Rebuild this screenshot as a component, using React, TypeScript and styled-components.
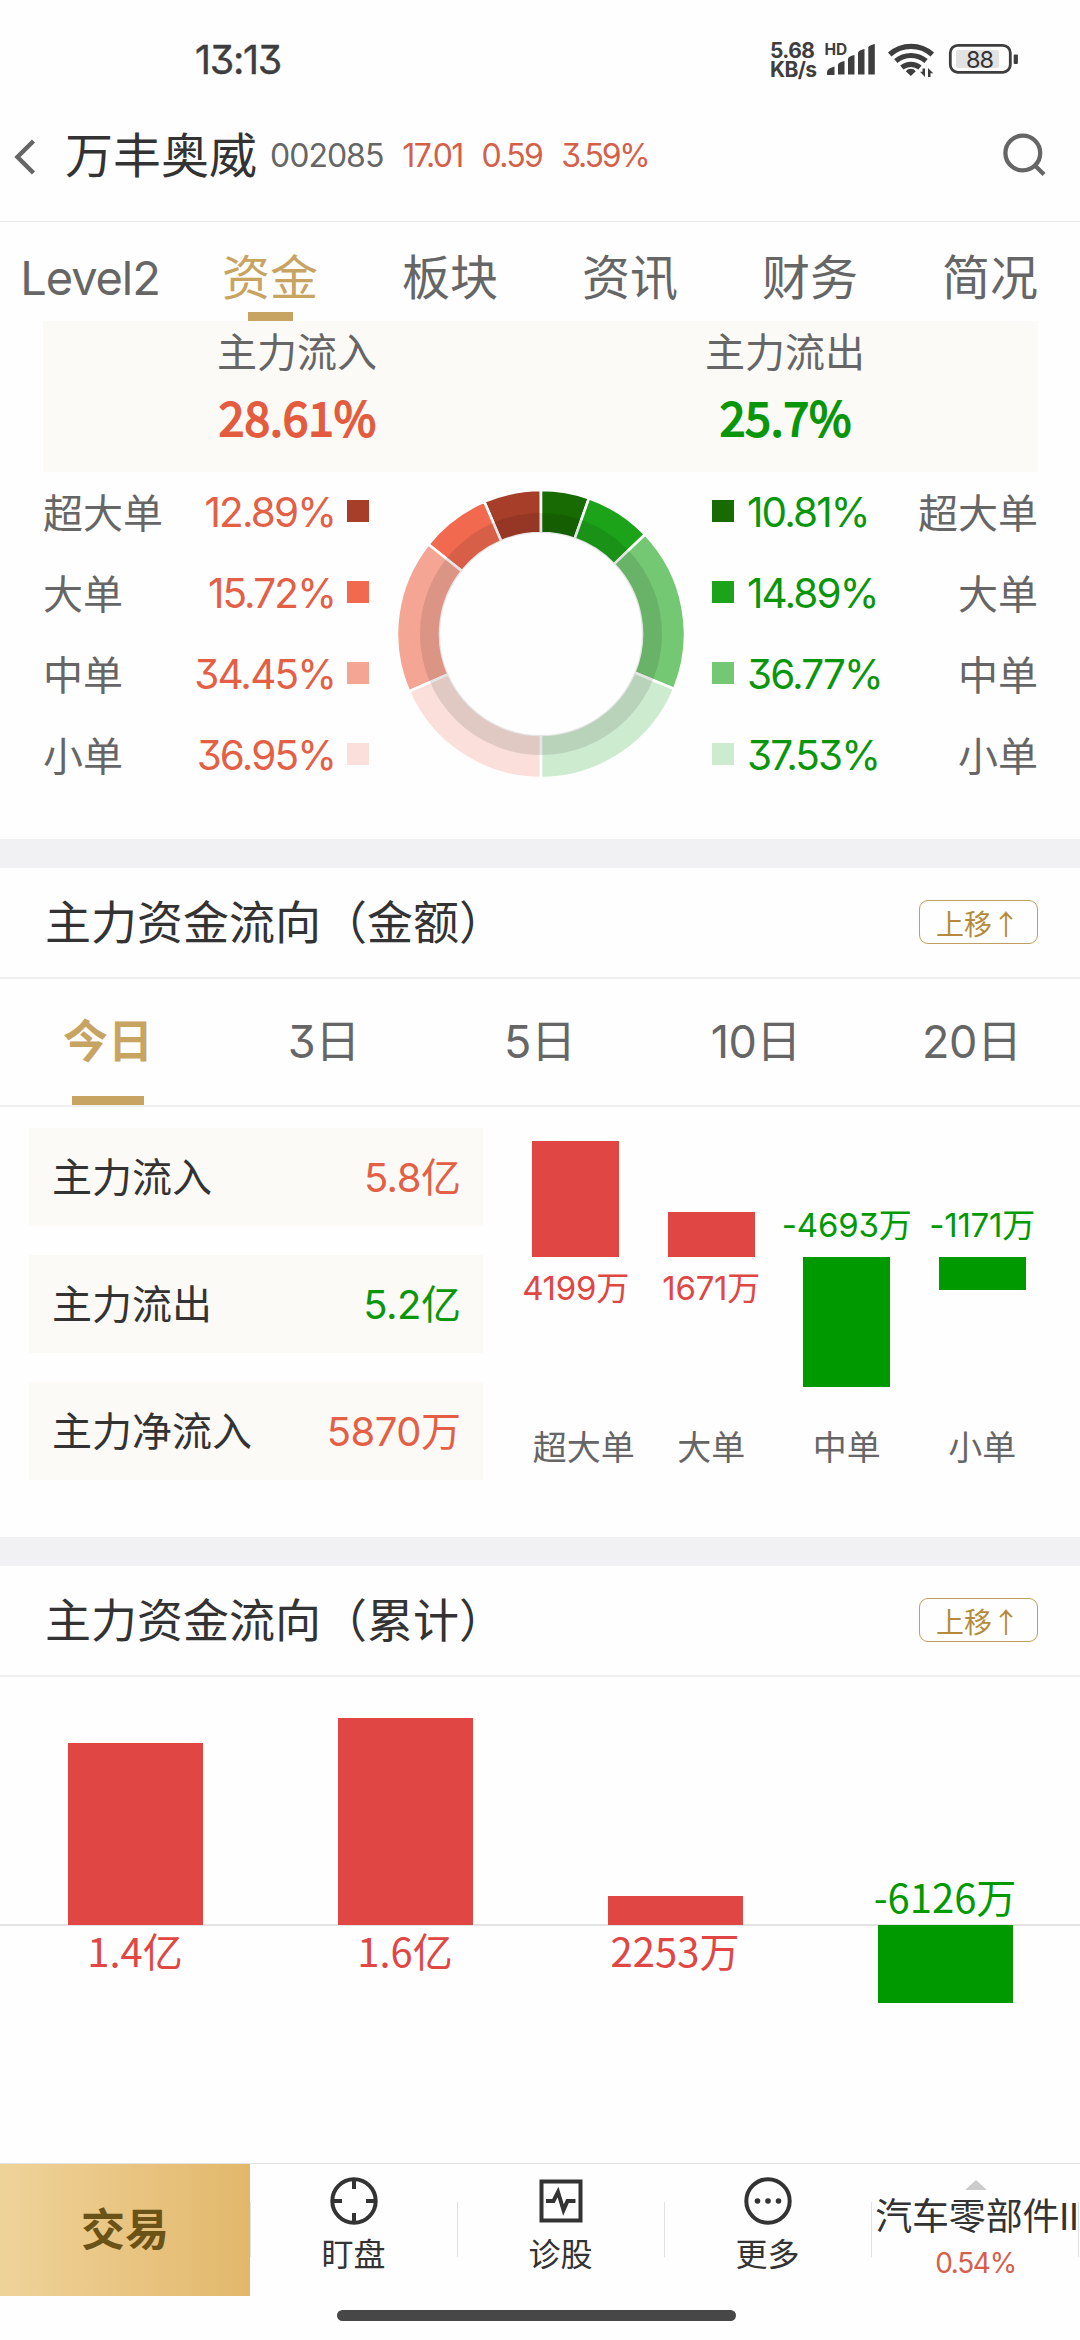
import React from "react";
import styled, { createGlobalStyle } from "styled-components";

const RED = "#e35f45";
const GREEN = "#0a960a";
const GOLD = "#c8a462";

const UI_FONT = `Inter, "Noto Sans CJK SC", sans-serif`;
const CJK_FONT = `"Noto Sans CJK SC", "Noto Sans", sans-serif`;

const GlobalStyle = createGlobalStyle`
  * { box-sizing: border-box; }
  body {
    margin: 0;
    background: #fefefe;
    font-family: ${UI_FONT};
    font-feature-settings: "cv09" 1;
    color: #333;
  }
`;

const Screen = styled.div`
  display: flex;
  flex-direction: column;
  width: 1080px;
  height: 2340px;
  overflow: hidden;
  background: #fefefe;
`;

const Num = styled.span<{ $size?: number; $track?: number; $color?: string }>`
  font-size: ${(p) => (p.$size ? `${p.$size}px` : "inherit")};
  letter-spacing: ${(p) => p.$track ?? -1}px;
  color: ${(p) => p.$color ?? "inherit"};
`;

/* ---------- status bar ---------- */

const StatusBar = styled.header`
  display: flex;
  justify-content: space-between;
  height: 110px;
  padding: 40px 61px 0 195px;
  color: #3e3e3e;
`;

const Clock = styled.div`
  font-size: 39.5px;
  font-weight: 400;
  line-height: 40px;
  letter-spacing: -1.3px;
  -webkit-text-stroke: 0.4px #3e3e3e;
`;

const StatusIcons = styled.div`
  display: flex;
  align-items: flex-start;
`;

const NetSpeed = styled.div`
  display: flex;
  flex-direction: column;
  width: 55px;
  padding-top: 1px;
  font-size: 21px;
  line-height: 19px;
  font-weight: 700;
  letter-spacing: -0.6px;
`;

const SignalBox = styled.svg`
  display: block;
  font-family: ${UI_FONT};
`;

/* ---------- title bar ---------- */

const TitleBar = styled.div`
  display: flex;
  align-items: center;
  height: 112px;
  padding: 0 32px 22px 12px;
  border-bottom: 1px solid #e6e6e6;
`;

const BackIcon = styled.svg`
  width: 26px;
  height: 40px;
  margin: 4px 28px 0 0;
`;

const StockName = styled.h1`
  margin: 2px 13px 0 -1px;
  font-size: 48px;
  line-height: 60px;
  font-weight: 400;
`;

const Quote = styled.div`
  display: flex;
  flex: 1;
  gap: 19px;
  color: #666;
  font-size: 32px;
  line-height: 40px;
  padding-top: 3px;
`;

/* ---------- page tabs ---------- */

const PageTabs = styled.nav`
  display: grid;
  grid-template-columns: repeat(6, 180px);
  height: 99px;
`;

const PageTab = styled.div<{ $active?: boolean }>`
  display: flex;
  flex-direction: column;
  align-items: center;
  justify-content: flex-end;
  font-size: 48px;
  line-height: 68px;
  color: ${(p) => (p.$active ? GOLD : "#666")};
  &::after {
    content: "";
    width: 45px;
    height: 9px;
    background: ${(p) => (p.$active ? GOLD : "transparent")};
  }
`;

/* ---------- distribution ---------- */

const Distribution = styled.section`
  height: 518px;
  padding: 0 42px 0 43px;
`;

const TotalsPanel = styled.div`
  display: grid;
  grid-template-columns: 508px 1fr;
  height: 151px;
  background: #fbfaf6;
`;

const Total = styled.div<{ $shift?: number }>`
  display: flex;
  flex-direction: column;
  align-items: center;
  padding-right: ${(p) => p.$shift ?? 0}px;
`;

const TotalLabel = styled.div`
  font-size: 40px;
  line-height: 60px;
  padding-top: 2px;
  color: #666;
`;

const TotalValue = styled.div<{ $color: string }>`
  font-family: ${CJK_FONT};
  font-size: 46px;
  line-height: 67px;
  padding-left: 1px;
  color: ${(p) => p.$color};
  -webkit-text-stroke: 1.8px ${(p) => p.$color};
`;

const Breakdown = styled.div`
  display: grid;
  grid-template-columns: 326px 1fr 326px;
`;

const OrderList = styled.ul`
  list-style: none;
  margin: 0;
  padding: 0;
`;

const OrderRow = styled.li<{ $side: "in" | "out" }>`
  display: flex;
  flex-direction: ${(p) => (p.$side === "in" ? "row" : "row-reverse")};
  align-items: center;
  height: 81px;
  font-size: 40px;
  color: ${(p) => (p.$side === "in" ? RED : GREEN)};
`;

const OrderName = styled.span`
  flex: 1;
  padding-bottom: 4px;
  color: #666;
  ${OrderRow}[data-side="out"] & {
    text-align: right;
  }
`;

const Swatch = styled.i<{ $color: string }>`
  width: 22px;
  height: 22px;
  margin: -4px 13px 0 12px;
  background: ${(p) => p.$color};
  ${OrderRow}[data-side="in"] & {
    margin-right: 0;
  }
  ${OrderRow}[data-side="out"] & {
    margin-left: 0;
  }
`;

const Donut = styled.svg`
  width: 290px;
  height: 290px;
  justify-self: center;
  margin-top: 17px;
`;

/* ---------- sections ---------- */

const Gap = styled.div`
  flex: none;
  height: 29px;
  background: #f1f1f4;
`;

const SectionHead = styled.div`
  display: flex;
  flex: none;
  align-items: center;
  justify-content: space-between;
  height: 111px;
  padding: 0 42px 1px 45px;
  border-bottom: 2px solid #f0f0f0;
`;

const SectionTitle = styled.h2`
  margin: 0;
  font-size: 46px;
  line-height: 60px;
  font-weight: 400;
`;

const MoveUp = styled.button`
  width: 119px;
  height: 44px;
  padding: 2px 0 0 16px;
  border: 1px solid #bf9f5f;
  border-radius: 9px;
  background: transparent;
  color: #b58b3b;
  font-family: ${CJK_FONT};
  font-size: 28px;
  line-height: 38px;
  text-align: left;
`;

const PeriodTabs = styled.nav`
  display: grid;
  flex: none;
  grid-template-columns: repeat(5, 216px);
  height: 128px;
  border-bottom: 2px solid #f0f0f0;
`;

const PeriodTab = styled.div<{ $active?: boolean }>`
  display: flex;
  flex-direction: column;
  align-items: center;
  justify-content: flex-end;
  font-size: 45px;
  line-height: 108px;
  font-weight: ${(p) => (p.$active ? 700 : 400)};
  color: ${(p) => (p.$active ? GOLD : "#666")};
  &::after {
    content: "";
    width: 72px;
    height: 9px;
    background: ${(p) => (p.$active ? GOLD : "transparent")};
  }
`;

const FlowBody = styled.section`
  display: grid;
  flex: none;
  grid-template-columns: 454px 542px;
  column-gap: 25px;
  height: 430px;
  padding-left: 29px;
`;

const FlowCards = styled.div`
  display: flex;
  flex-direction: column;
  gap: 29px;
  padding-top: 21px;
`;

const FlowCard = styled.div`
  display: flex;
  align-items: center;
  justify-content: space-between;
  height: 98px;
  padding: 0 22px 5px 23px;
  background: #fbfaf6;
  font-size: 40px;
`;

const BarGrid = styled.div<{ $columns: string; $up: number; $down: number }>`
  display: grid;
  grid-template-columns: ${(p) => p.$columns};
  grid-template-rows: ${(p) => p.$up}px ${(p) => p.$down}px;
  grid-auto-flow: column;
`;

const Upper = styled.div`
  display: flex;
  flex-direction: column;
  align-items: center;
  justify-content: flex-end;
`;

const Lower = styled.div`
  display: flex;
  flex-direction: column;
  align-items: center;
`;

const Bar = styled.div<{ $color: string; $width: number }>`
  width: ${(p) => p.$width}px;
  background: ${(p) => p.$color};
`;

const FlowValue = styled.div<{ $color: string }>`
  color: ${(p) => p.$color};
  font-size: 33px;
  line-height: 63px;
  white-space: nowrap;
`;

const FlowLabels = styled.div`
  display: grid;
  grid-template-columns: repeat(4, 135.5px);
  font-size: 34px;
  line-height: 46px;
  color: #666;
  text-align: center;
`;

const FlowLabel = styled.span<{ $indent?: number }>`
  padding-left: ${(p) => p.$indent ?? 0}px;
`;

const Cumulative = styled.section`
  flex: 1;
`;

const CumulativeGrid = styled(BarGrid)`
  background: linear-gradient(#e3e3e3, #e3e3e3) 0 247px / 100% 2px no-repeat;
`;

const CumulativeValue = styled.div<{ $color: string }>`
  color: ${(p) => p.$color};
  font-family: ${CJK_FONT};
  font-size: 40px;
  line-height: 50px;
  ${Upper} > & {
    padding-bottom: 4px;
  }
`;

/* ---------- bottom bar ---------- */

const BottomBar = styled.footer`
  display: grid;
  flex: none;
  grid-template-columns: 250px 207px 207px 207px 209px;
  height: 133px;
  border-top: 1px solid #e2e2e2;
`;

const Trade = styled.div`
  display: grid;
  place-items: center;
  padding-bottom: 6px;
  background: linear-gradient(90deg, #eed399, #e8c27e 60%, #e1b86b);
  color: #6b5217;
  font-size: 44px;
  font-weight: 700;
`;

const Action = styled.div`
  display: flex;
  flex-direction: column;
  align-items: center;
  padding-top: 12px;
  background: linear-gradient(#e2e2e2, #e2e2e2) 0 38px / 1px 55px no-repeat;
  font-size: 32px;
  line-height: 40px;
`;

const ActionIcon = styled.svg`
  width: 50px;
  height: 50px;
  margin-bottom: 9px;
`;

const Industry = styled(Action)`
  background: linear-gradient(#e2e2e2, #e2e2e2) 0 38px / 1px 55px no-repeat,
    linear-gradient(#e2e2e2, #e2e2e2) 207px 38px / 1px 55px no-repeat;
  padding-top: 16px;
  font-size: 37px;
  line-height: 46px;
  white-space: nowrap;
`;

const IndustryName = styled.span`
  padding: 2px 0 0 3px;
  letter-spacing: -0.2px;
`;

const Caret = styled.svg`
  width: 22px;
  height: 10px;
  margin-bottom: 2px;
`;

const HomeArea = styled.div`
  display: flex;
  flex: none;
  justify-content: center;
  height: 44px;
  padding: 14px 7px 0 0;
`;

const HomeIndicator = styled.div`
  width: 399px;
  height: 11px;
  border-radius: 6px;
  background: #474747;
`;

/* ---------- data ---------- */

const pageTabs = ["Level2", "资金", "板块", "资讯", "财务", "简况"];

const inflow = [
  { name: "超大单", pct: 12.89, color: "#a63e29" },
  { name: "大单", pct: 15.72, color: "#f16a50" },
  { name: "中单", pct: 34.45, color: "#f5a593" },
  { name: "小单", pct: 36.95, color: "#fadfda" },
];
const outflow = [
  { name: "超大单", pct: 10.81, color: "#186a03" },
  { name: "大单", pct: 14.89, color: "#1ca31a" },
  { name: "中单", pct: 36.77, color: "#74c874" },
  { name: "小单", pct: 37.53, color: "#cdebcf" },
];

const periods = [
  ["", "今日"],
  ["3", "日"],
  ["5", "日"],
  ["10", "日"],
  ["20", "日"],
];

const flowCards = [
  { label: "主力流入", num: "5.8", unit: "亿", color: RED },
  { label: "主力流出", num: "5.2", unit: "亿", color: GREEN },
  { label: "主力净流入", num: "5870", unit: "万", color: RED },
];

const flowBars = [
  { num: "4199", height: 116, up: true },
  { num: "1671", height: 45.5, up: true },
  { num: "-4693", height: 130, up: false },
  { num: "-1171", height: 33, up: false },
];

const cumulativeBars = [
  { text: "1.4亿", height: 182.5, up: true },
  { text: "1.6亿", height: 207, up: true },
  { text: "2253万", height: 29, up: true },
  { text: "-6126万", height: 78, up: false },
];

const BAR_RED = "#e04643";
const BAR_GREEN = "#009900";

/* ---------- pieces ---------- */

function slicePath(from: number, to: number, inner: number, outer: number) {
  const at = (deg: number, r: number) => {
    const a = (deg * Math.PI) / 180;
    return `${145 + r * Math.sin(a)} ${145 - r * Math.cos(a)}`;
  };
  const sweep = to > from ? 1 : 0;
  return `M${at(from, outer)}A${outer} ${outer} 0 0 ${sweep} ${at(to, outer)}L${at(to, inner)}A${inner} ${inner} 0 0 ${1 - sweep} ${at(from, inner)}Z`;
}

function DonutChart() {
  const slices = [
    { list: inflow, dir: -1 },
    { list: outflow, dir: 1 },
  ].flatMap(({ list, dir }) => {
    let acc = 0;
    return list.map((s) => {
      const from = acc;
      acc += s.pct * 1.8;
      return { color: s.color, d: slicePath(from * dir, acc * dir, 101, 144) };
    });
  });
  return (
    <Donut viewBox="0 0 290 290">
      {slices.map((s) => (
        <path key={s.color} d={s.d} fill={s.color} stroke="#fefefe" strokeWidth="2.6" />
      ))}
      <circle cx="145" cy="145" r="111" fill="none" stroke="#000" strokeOpacity="0.1" strokeWidth="20" />
    </Donut>
  );
}

function Orders({ list, side }: { list: typeof inflow; side: "in" | "out" }) {
  return (
    <OrderList>
      {list.map((o) => (
        <OrderRow key={o.name} $side={side} data-side={side}>
          <OrderName>{o.name}</OrderName>
          <Num $size={40.5} $track={-1.9}>{o.pct.toFixed(2)}%</Num>
          <Swatch $color={o.color} />
        </OrderRow>
      ))}
    </OrderList>
  );
}

function Heading({ children }: { children: React.ReactNode }) {
  return (
    <SectionHead>
      <SectionTitle>{children}</SectionTitle>
      <MoveUp>上移↑</MoveUp>
    </SectionHead>
  );
}

function StatusGlyphs() {
  return (
    <SignalBox width="194" height="40" viewBox="825 40 194 40">
      <text x="824.5" y="55" fontSize="15.5" fontWeight="700" fill="#3e3e3e" letterSpacing="0">HD</text>
      <g fill="#3e3e3e">
        <path d="M827 74.5v-3q1-3.500 7.500-5v8q0 .5-.5.500h-6.500z" />
        <path d="M838 74.500v-9.500q0-2.500 6.500-4v13.500z" />
        <path d="M848 74.500v-15.500q0-2.500 6.500-4v19.500z" />
        <path d="M858 74.500v-21.500q0-2.500 6.500-4v25.500z" />
        <path d="M868.300 74.500v-27q0-2 6.500-3.500v30.500z" />
        <path d="M910.800 76l-5-4.800a6.500 6.500 0 0 1 10 0z" />
        <path d="M925 68.500v8.500l-5-5.200h2.500v-3.300zM928 77v-9l5.200 5.200h-2.700v3.800z" />
      </g>
      <g fill="none" stroke="#3e3e3e" strokeWidth="5.200">
        <path d="M889.700 54.500a32 32 0 0 1 42.600 0" />
        <path d="M895.800 61a23.500 23.500 0 0 1 30.200 0" />
        <path d="M901.800 67.500a14.500 14.500 0 0 1 18.200 0" />
      </g>
      <rect x="950.300" y="45.300" width="60" height="27" rx="7.500" fill="none" stroke="#3e3e3e" strokeWidth="2.800" />
      <rect x="956" y="50" width="43" height="18" rx="2" fill="#e2e2e2" />
      <rect x="1013.700" y="54.500" width="4.200" height="9.500" rx="1" fill="#3e3e3e" />
      <text x="979.500" y="67.500" fontSize="23.500" letterSpacing="-1" textAnchor="middle" fill="#333">88</text>
    </SignalBox>
  );
}

export default function App() {
  return (
    <Screen>
      <GlobalStyle />
      <StatusBar>
        <Clock>13:13</Clock>
        <StatusIcons>
          <NetSpeed>
            <span>5.68</span>
            <span>KB/s</span>
          </NetSpeed>
          <StatusGlyphs />
        </StatusIcons>
      </StatusBar>

      <TitleBar>
        <BackIcon viewBox="0 0 26 40" fill="none" stroke="#666" strokeWidth="4.500">
          <path d="M21.500 4L5.500 20l16 16" />
        </BackIcon>
        <StockName>万丰奥威</StockName>
        <Quote>
          <Num>002085</Num>
          <Num $color="#d4604a" $track={-1.700}>17.01</Num>
          <Num $color="#d4604a" $track={-1.700}>0.59</Num>
          <Num $color="#d4604a" $track={-2.300}>3.59%</Num>
        </Quote>
        <svg width="46" height="46" viewBox="0 0 46 46" fill="none" stroke="#666" strokeWidth="4.300">
          <circle cx="20.800" cy="21" r="17.400" />
          <path d="M33 33.500l9 9" />
        </svg>
      </TitleBar>

      <PageTabs>
        {pageTabs.map((t, i) => (
          <PageTab key={t} $active={i === 1}>
            {i === 0 ? <Num $size={47} $track={-1.100}>{t}</Num> : t}
          </PageTab>
        ))}
      </PageTabs>

      <Distribution>
        <TotalsPanel>
          <Total>
            <TotalLabel>主力流入</TotalLabel>
            <TotalValue $color="#e35c40">28.61%</TotalValue>
          </Total>
          <Total $shift={19}>
            <TotalLabel>主力流出</TotalLabel>
            <TotalValue $color="#0a960a">25.7%</TotalValue>
          </Total>
        </TotalsPanel>
        <Breakdown>
          <Orders list={inflow} side="in" />
          <DonutChart />
          <Orders list={outflow} side="out" />
        </Breakdown>
      </Distribution>

      <Gap />
      <Heading>主力资金流向（金额）</Heading>
      <PeriodTabs>
        {periods.map(([n, unit], i) => (
          <PeriodTab key={n} $active={i === 0}>
            <span>
              <Num $track={-0.500}>{n}</Num>
              {unit}
            </span>
          </PeriodTab>
        ))}
      </PeriodTabs>
      <FlowBody>
        <FlowCards>
          {flowCards.map((c) => (
            <FlowCard key={c.label}>
              <span>{c.label}</span>
              <span style={{ color: c.color }}>
                <Num $track={-0.500}>{c.num}</Num>
                {c.unit}
              </span>
            </FlowCard>
          ))}
        </FlowCards>
        <div>
          <BarGrid $columns="repeat(4, 135.5px)" $up={150} $down={168}>
            {flowBars.map((b) => {
              const color = b.up ? BAR_RED : BAR_GREEN;
              const bar = <Bar $color={color} $width={87} style={{ height: b.height }} />;
              const value = (
                <FlowValue $color={color}>
                  <Num $track={-0.200}>{b.num}</Num>万
                </FlowValue>
              );
              return (
                <React.Fragment key={b.num}>
                  <Upper>{b.up ? bar : value}</Upper>
                  <Lower>{b.up ? value : bar}</Lower>
                </React.Fragment>
              );
            })}
          </BarGrid>
          <FlowLabels>
            <FlowLabel $indent={16}>超大单</FlowLabel>
            <FlowLabel>大单</FlowLabel>
            <FlowLabel>中单</FlowLabel>
            <FlowLabel>小单</FlowLabel>
          </FlowLabels>
        </div>
      </FlowBody>

      <Gap />
      <Heading>主力资金流向（累计）</Heading>
      <Cumulative>
        <CumulativeGrid $columns="repeat(4, 270px)" $up={248} $down={200}>
          {cumulativeBars.map((b) => {
            const color = b.up ? BAR_RED : BAR_GREEN;
            const bar = <Bar $color={color} $width={135} style={{ height: b.height }} />;
            const value = <CumulativeValue $color={color}>{b.text}</CumulativeValue>;
            return (
              <React.Fragment key={b.text}>
                <Upper>{b.up ? bar : value}</Upper>
                <Lower>{b.up ? value : bar}</Lower>
              </React.Fragment>
            );
          })}
        </CumulativeGrid>
      </Cumulative>

      <BottomBar>
        <Trade>交易</Trade>
        <Action>
          <ActionIcon viewBox="0 0 50 50" fill="none" stroke="#333" strokeWidth="4">
            <circle cx="25" cy="25" r="21.700" />
            <path d="M25 4v9M25 37v9M4 25h9M37 25h9" />
          </ActionIcon>
          盯盘
        </Action>
        <Action>
          <ActionIcon viewBox="0 0 50 50" fill="none" stroke="#333" strokeWidth="4">
            <path d="M5.500 5.500h39v39h-39z" />
            <path d="M10 25h7.500l4.500-9 5.500 18 4-9h8" />
          </ActionIcon>
          诊股
        </Action>
        <Action>
          <ActionIcon viewBox="0 0 50 50" fill="none" stroke="#333" strokeWidth="4">
            <circle cx="25" cy="25" r="21.700" />
            <g fill="#333" stroke="none">
              <circle cx="14.500" cy="25" r="2.800" />
              <circle cx="25" cy="25" r="2.800" />
              <circle cx="35.500" cy="25" r="2.800" />
            </g>
          </ActionIcon>
          更多
        </Action>
        <Industry>
          <Caret viewBox="0 0 22 10">
            <path d="M11 0l11 10H0z" fill="#ccc" />
          </Caret>
          <IndustryName>汽车零部件II</IndustryName>
          <Num $size={28} $track={-1.300} $color="#d4604a">0.54%</Num>
        </Industry>
      </BottomBar>
      <HomeArea>
        <HomeIndicator />
      </HomeArea>
    </Screen>
  );
}
